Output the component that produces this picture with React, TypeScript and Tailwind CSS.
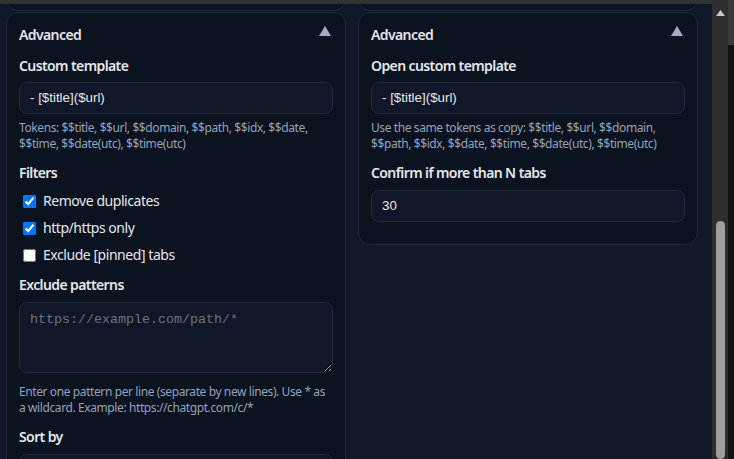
import React from "react";

function Triangle() {
  return (
    <svg width="12" height="10" viewBox="0 0 12 10" className="mt-[1px]">
      <polygon points="6,0 12,10 0,10" fill="#9fb0c6" />
    </svg>
  );
}

function Label({ children }: { children: React.ReactNode }) {
  return (
    <div className="text-[14px] leading-[20px] font-semibold tracking-[-0.6px] text-[#e5e7eb]">{children}</div>
  );
}

function Help({ children }: { children: React.ReactNode }) {
  return (
    <div className="mt-[6px] text-[12px] leading-[16px] tracking-[-0.4px] text-[#94a3b8]">{children}</div>
  );
}

function TextInput({ value }: { value: string }) {
  return (
    <div className="mt-[6px] h-[32px] rounded-[8px] border border-[#1e293b] bg-[#0f1729] px-[10px] flex items-center font-['Liberation_Sans',Arial,sans-serif] text-[13.33px] text-[#e5e7eb]">
      {value}
    </div>
  );
}

function Check({ checked, label }: { checked: boolean; label: string }) {
  return (
    <label className="flex items-center h-[20px] pl-[4px]">
      <input type="checkbox" defaultChecked={checked} className="w-[13px] h-[13px] m-0" />
      <span className="ml-[7px] text-[14px] leading-[20px] tracking-[-0.45px] text-[#e5e7eb]">{label}</span>
    </label>
  );
}

function Header() {
  return (
    <div className="flex items-start justify-between h-[20px]">
      <div className="text-[14px] leading-[20px] font-semibold tracking-[-0.6px] text-[#e5e7eb]">Advanced</div>
      <div className="mr-[2px]">
        <Triangle />
      </div>
    </div>
  );
}

export default function App() {
  return (
    <div className="w-[734px] h-[459px] overflow-hidden flex bg-[#0f1729] font-['Noto_Sans',sans-serif]">
      <div className="w-[712px] flex flex-col">
        <div className="h-[4px] bg-[#323232] shrink-0" />
        <div className="h-[7px] overflow-hidden flex items-end gap-[12px] pl-[6px] shrink-0">
          <div className="w-[340px] h-[24px] shrink-0 rounded-b-[12px] border border-t-0 border-[#1e293b] bg-[#0b1220]" />
          <div className="w-[340px] h-[24px] shrink-0 rounded-b-[12px] border border-t-0 border-[#1e293b] bg-[#0b1220]" />
        </div>
        <div className="flex items-start gap-[12px] pl-[6px] pt-[1px]">
          <div className="w-[340px] shrink-0 rounded-[12px] border border-[#1e293b] bg-[#0b1220] px-[12px] pt-[12px] pb-[40px]">
            <Header />
            <div className="mt-[11px]">
              <Label>Custom template</Label>
              <TextInput value="- [$title]($url)" />
              <Help>
                Tokens: $$title, $$url, $$domain, $$path, $$idx, $$date, $$time, $$date(utc), $$time(utc)
              </Help>
            </div>
            <div className="mt-[11px]">
              <Label>Filters</Label>
              <div className="mt-[8px] flex flex-col gap-[7px]">
                <Check checked label="Remove duplicates" />
                <Check checked label="http/https only" />
                <Check checked={false} label="Exclude [pinned] tabs" />
              </div>
            </div>
            <div className="mt-[10px]">
              <Label>Exclude patterns</Label>
              <textarea
                placeholder="https://example.com/path/*"
                className="block mt-[7px] w-full h-[71px] rounded-[8px] border border-[#1e293b] bg-[#0f1729] px-[10px] pt-[9px] font-['Liberation_Mono',monospace] text-[13.33px] leading-[16px] text-[#e5e7eb] placeholder:text-[#6b7280] outline-none"
              />
              <div className="mt-[11px] text-[12px] leading-[16px] tracking-[-0.4px] text-[#94a3b8]">
                Enter one pattern per line (separate by new lines). Use * as a wildcard. Example: https://chatgpt.com/c/*
              </div>
            </div>
            <div className="mt-[11px]">
              <Label>Sort by</Label>
              <div className="mt-[7px] h-[32px] rounded-[8px] border border-[#1e293b] bg-[#0f1729]" />
            </div>
          </div>
          <div className="w-[340px] shrink-0 rounded-[12px] border border-[#1e293b] bg-[#0b1220] px-[12px] pt-[12px] pb-[22px]">
            <Header />
            <div className="mt-[11px]">
              <Label>Open custom template</Label>
              <TextInput value="- [$title]($url)" />
              <Help>
                Use the same tokens as copy: $$title, $$url, $$domain, $$path, $$idx, $$date, $$time, $$date(utc), $$time(utc)
              </Help>
            </div>
            <div className="mt-[11px]">
              <Label>Confirm if more than N tabs</Label>
              <div className="mt-[7px] h-[32px] rounded-[8px] border border-[#1e293b] bg-[#0f1729] px-[10px] flex items-center font-['Liberation_Sans',Arial,sans-serif] text-[13.33px] text-[#e5e7eb]">
                30
              </div>
            </div>
          </div>
        </div>
      </div>
      <div className="w-[16px] bg-[#2e2e2e] flex flex-col items-center shrink-0">
        <svg width="9" height="6" viewBox="0 0 9 6" className="mt-[10px]">
          <polygon points="4.5,0 9,6 0,6" fill="#c8c8c8" />
        </svg>
        <div className="mt-[205px] w-[9px] flex-1 rounded-full bg-[#9e9e9e]" />
      </div>
      <div className="w-[6px] flex flex-col shrink-0">
        <div className="h-[45px] bg-[#3a3a3a]" />
        <div className="flex-1 bg-[#121212]" />
      </div>
    </div>
  );
}
